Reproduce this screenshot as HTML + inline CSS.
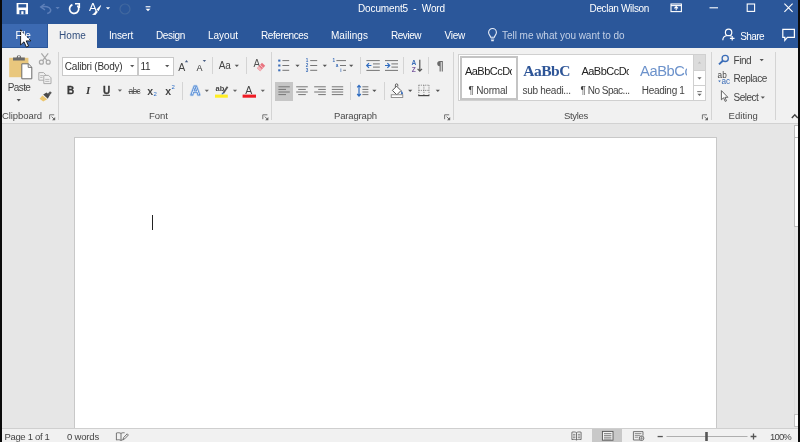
<!DOCTYPE html>
<html><head><meta charset="utf-8"><title>Document5 - Word</title>
<style>
html,body{margin:0;padding:0;}
body{width:800px;height:442px;position:relative;overflow:hidden;background:#e6e6e6;font-family:"Liberation Sans",sans-serif;}
.a{position:absolute;}
.t{position:absolute;height:14px;line-height:14px;white-space:pre;}
svg{position:absolute;overflow:visible;}
.sep{position:absolute;width:1px;background:#d4d4d4;}
#fg{position:absolute;left:0;top:0;width:800px;height:442px;will-change:transform;}

</style></head>
<body>
<div id="fg">
<!-- window chrome -->
<div class="a" style="left:0;top:0;width:800px;height:48px;background:#2b579a"></div>
<div class="a" style="left:2px;top:24px;width:45px;height:23px;background:#3c6ab2"></div>
<div class="a" style="left:48px;top:24px;width:49px;height:24px;background:#f1f1f1"></div>
<!-- ribbon -->
<div class="a" style="left:0;top:48px;width:800px;height:75px;background:#f1f1f1"></div>
<div class="a" style="left:0;top:123px;width:800px;height:1px;background:#d2d2d2"></div>
<!-- document area -->
<div class="a" style="left:0;top:124px;width:800px;height:304px;background:#e6e6e6"></div>
<div class="a" style="left:74px;top:137px;width:643px;height:292px;background:#fff;border:1px solid #c8c8c8;box-sizing:border-box"></div>
<div class="a" style="left:152px;top:215px;width:1px;height:15px;background:#222"></div>
<!-- vertical scrollbar sliver -->
<div class="a" style="left:794px;top:125px;width:4px;height:102px;background:#fff;border:1px solid #bdbdbd;border-right:none;box-sizing:border-box"></div>
<div class="a" style="left:794px;top:137px;width:4px;height:1px;background:#bdbdbd"></div>
<div class="a" style="left:794px;top:227px;width:1px;height:187px;background:#dedede"></div>
<div class="a" style="left:794px;top:414px;width:4px;height:13px;background:#fff;border:1px solid #c4c4c4;border-right:none;box-sizing:border-box"></div>
<!-- status bar -->
<div class="a" style="left:0;top:428px;width:800px;height:14px;background:#f1f1f1;border-top:1px solid #cfcfcf;box-sizing:border-box"></div>
<div class="a" style="left:592px;top:429px;width:30px;height:13px;background:#c8c8c8"></div>

<!-- ribbon separators -->
<div class="sep" style="left:58px;top:52px;height:68px"></div>
<div class="sep" style="left:271px;top:52px;height:68px"></div>
<div class="sep" style="left:453px;top:52px;height:68px"></div>
<div class="sep" style="left:711px;top:52px;height:68px"></div>
<div class="sep" style="left:775px;top:52px;height:68px"></div>
<div class="sep" style="left:212px;top:57px;height:17px"></div>
<div class="sep" style="left:246px;top:57px;height:17px"></div>
<div class="sep" style="left:182px;top:82px;height:18px"></div>
<div class="sep" style="left:360px;top:57px;height:17px"></div>
<div class="sep" style="left:403px;top:57px;height:17px"></div>
<div class="sep" style="left:428px;top:57px;height:17px"></div>
<div class="sep" style="left:350px;top:82px;height:18px"></div>
<div class="sep" style="left:384px;top:82px;height:18px"></div>

<!-- font combos -->
<div class="a" style="left:62px;top:57px;width:76px;height:19px;background:#fff;border:1px solid #c9c9c9;box-sizing:border-box"></div>
<div class="a" style="left:138px;top:57px;width:36px;height:19px;background:#fff;border:1px solid #c9c9c9;box-sizing:border-box"></div>

<!-- align-left selected -->
<div class="a" style="left:275px;top:82px;width:18px;height:19px;background:#c6c6c6"></div>

<!-- styles gallery -->
<div class="a" style="left:458px;top:54px;width:248px;height:47px;background:#fff;border:1px solid #d0d0d0;box-sizing:border-box"></div>
<div class="a" style="left:459.5px;top:55.5px;width:58px;height:44px;border:2.5px solid #c4c4c4;box-sizing:border-box"></div>
<div class="a" style="left:693px;top:54px;width:13px;height:17px;background:#dcdcdc;border:1px solid #d0d0d0;box-sizing:border-box"></div>
<div class="a" style="left:693px;top:70px;width:13px;height:16px;background:#fff;border:1px solid #d0d0d0;box-sizing:border-box"></div>
<div class="a" style="left:693px;top:85px;width:13px;height:16px;background:#fff;border:1px solid #d0d0d0;box-sizing:border-box"></div>
<svg width="800" height="442" viewBox="0 0 800 442" style="left:0;top:0" font-family="'Liberation Sans', sans-serif">
<defs>
<path id="dd" d="M-2.1 -1.1h4.2l-2.1 2.3z"/>
</defs>
<!-- ===== QAT ===== -->
<g>
<rect x="16.6" y="3" width="11.4" height="11.2" fill="#fff"/>
<rect x="18.4" y="4.2" width="7.8" height="3.3" fill="#2b579a"/>
<rect x="19.4" y="10.1" width="6" height="4.1" fill="#2b579a"/>
<rect x="21.3" y="11.2" width="2.2" height="3" fill="#fff"/>
</g>
<!-- undo (disabled) -->
<g fill="none" stroke="#5d7fb9" stroke-width="1.5">
<path d="M41 7c4-1 8.6-0.4 9.6 2.4c0.6 2-1 3.6-3.4 4.2"/>
<path d="M44.6 4l-3.8 3 4.2 2.8" />
</g>
<use href="#dd" x="57.6" y="8" fill="#5d7fb9"/>
<!-- repeat -->
<g fill="none" stroke="#fff" stroke-width="1.7">
<path d="M77.4 5.6a4.6 4.6 0 1 1 -5 -1"/>
<path d="M75 3.7h4.3v4.2" stroke-width="1.6"/>
</g>
<!-- A with brush -->
<text x="88.9" y="10.9" font-size="11.6" fill="#fff">A</text>
<path d="M96.4 9.6l4.2-4.4 0.6 0.4-2.6 5.6z M95.8 10.6l2.2 1.2-2.6 3.2-3.4-0.2c2-1 3-2.4 3.800-4.2z" fill="#fff"/>
<use href="#dd" x="108" y="8.3" fill="#fff"/>
<!-- disabled circle -->
<circle cx="125" cy="9" r="5" fill="none" stroke="#41689f" stroke-width="1.2"/>
<!-- customize qat -->
<rect x="145.6" y="6.2" width="4.8" height="1.1" fill="#fff"/>
<path d="M145.6 8.8h4.8l-2.4 2.4z" fill="#fff"/>

<!-- ===== window controls ===== -->
<g fill="none" stroke="#fff" stroke-width="1.1">
<rect x="671" y="4" width="10.4" height="7.6"/>
<path d="M671 5.6h10.4" />
<path d="M676.2 10.2v-3.4M674.4 8.4l1.8-1.8 1.8 1.8"/>
<path d="M709.5 7.8h8.5"/>
<rect x="747.2" y="4" width="7.4" height="7.4"/>
<path d="M784.4 3.7l8.2 8.2M792.6 3.7l-8.2 8.2"/>
</g>

<!-- ===== tab row icons ===== -->
<!-- lightbulb -->
<g fill="none" stroke="#e8eef8" stroke-width="1.1">
<path d="M490.6 37.2c0-1.6-2-2.4-2-4.8a3.9 3.9 0 0 1 7.8 0c0 2.4-2 3.2-2 4.8z"/>
<path d="M490.8 39h3.4M491.2 40.6h2.6"/>
</g>
<!-- share person -->
<g fill="none" stroke="#fff" stroke-width="1.2">
<circle cx="728.6" cy="32.4" r="3.2"/>
<path d="M722.8 40.3c0-3 2.2-4.8 5.8-4.8 1.2 0 2.2 0.2 3 0.6"/>
<path d="M732.2 36v4.6M729.9 38.3h4.6"/>
</g>
<!-- comment -->
<path d="M782.8 29.4h11.6v8h-7l-2.6 3v-3h-2z" fill="none" stroke="#fff" stroke-width="1.2"/>

<!-- ===== clipboard group ===== -->
<!-- paste -->
<rect x="9.2" y="57.8" width="19.2" height="19.4" fill="#e9c77d"/>
<path d="M13 60.400v-2.800h3.600a2.300 2.300 0 0 1 4.600 0h3.600v2.800z" fill="#6a6a6a"/>
<circle cx="18.9" cy="56.6" r="0.9" fill="#f1f1f1"/>
<path d="M21.8 63.8h6.6l3.4 3.4v11.6h-10z" fill="#fff" stroke="#6a6a6a" stroke-width="1"/>
<path d="M28.2 63.8v3.6h3.6" fill="none" stroke="#6a6a6a" stroke-width="0.9"/>
<use href="#dd" x="18.7" y="100.2" fill="#555"/>
<!-- cut (disabled) -->
<g fill="none" stroke="#a8a8a8" stroke-width="1.2">
<circle cx="41.4" cy="62.2" r="2"/><circle cx="48.2" cy="62.2" r="2"/>
<path d="M42.6 60.6l5.6-7.2M47 60.6l-5.6-7.2"/>
</g>
<!-- copy (disabled) -->
<g fill="#f1f1f1" stroke="#ababab" stroke-width="1">
<path d="M38.8 72.6h4.8l2 2v5.6h-6.8z"/>
<path d="M43.800 75.400h4.800l2.400 2.400v5.800h-7.200z"/>
<path d="M45.200 79.400h4.200M45.200 81.400h4.200" stroke-width="0.8"/>
<path d="M40.2 75.6h3M40.2 77.4h2.4" stroke-width="0.8"/>
</g>
<!-- format painter -->
<g>
<path d="M47.2 94.2l2.8-3 1.8 1.6-2.8 3.2z" fill="#5a5a5a"/>
<path d="M43.2 94.4l3.4-1.8 3 3-1.8 3.2z" fill="#4a4a4a"/>
<path d="M42.4 95.4l-2.8 3.4 3.6 2.8 4-2.4z" fill="#ecc66e"/>
</g>
<!-- launchers -->
<g id="lnch" fill="none" stroke="#666" stroke-width="0.9">
<path d="M49.6 119.2v-4.4h4.6"/>
<path d="M51.6 116.6l2.6 2.6"/>
<path d="M55.2 117v3.200h-3.200z" fill="#666" stroke="none"/>
</g>
<use href="#lnch" x="213.2"/>
<use href="#lnch" x="395"/>
<use href="#lnch" x="652.8"/>

<!-- ===== font group ===== -->
<use href="#dd" x="132.2" y="66" fill="#555"/>
<use href="#dd" x="167.2" y="66" fill="#555"/>
<path d="M184.8 62.2l1.7-2.2 1.7 2.2z" fill="#4a5f85"/>
<path d="M202.7 60h3.4l-1.7 2.1z" fill="#4a5f85"/>
<use href="#dd" x="236.8" y="65.8" fill="#555"/>
<!-- clear formatting -->
<text x="253.6" y="66.6" font-size="10" fill="#555">A</text>
<path d="M257 68.2l5-5.4 3.2 3-5 5.4z" fill="#e8737f"/>
<path d="M257 68.2l1.8-1.9 3.2 3-1.8 1.9z" fill="#f3b6bc"/>
<path d="M259.6 64.6l3.2 3" stroke="#f8d8dc" stroke-width="0.8"/>
<!-- underline -->
<rect x="102.8" y="94.8" width="7.2" height="1" fill="#3a3a3a"/>
<use href="#dd" x="119.9" y="90.6" fill="#666"/>
<!-- text effects A -->
<text x="190.4" y="95.2" font-size="13.4" font-weight="bold" fill="#fff" stroke="#b5cfee" stroke-width="2.4" stroke-linejoin="round" opacity="0.7">A</text>
<text x="190.4" y="95.2" font-size="13.4" font-weight="bold" fill="#fff" stroke="#5a8fd6" stroke-width="0.9" stroke-linejoin="round">A</text>
<use href="#dd" x="206.8" y="90.8" fill="#666"/>
<!-- highlight -->
<text x="215.6" y="91" font-size="7.5" fill="#444" font-weight="bold">ab</text>
<path d="M222.6 92.6l4.2-6.4 1.5 1-4.2 6.4z" fill="#555"/>
<path d="M222 92.4l2.2 1.4-2.6 1z" fill="#3a6fc4"/>
<rect x="215" y="94.6" width="12.8" height="3.1" fill="#ffee22"/>
<use href="#dd" x="235" y="90.8" fill="#666"/>
<!-- font color -->
<text x="245.2" y="93.6" font-size="10.5" fill="#444">A</text>
<rect x="242.6" y="94.6" width="13.4" height="3.1" fill="#ee1c24"/>
<use href="#dd" x="262.8" y="90.8" fill="#666"/>

<!-- ===== paragraph group ===== -->
<!-- bullets -->
<g fill="#3b6db8">
<rect x="278.2" y="59.6" width="2.2" height="2"/><rect x="278.2" y="64.5" width="2.2" height="2"/><rect x="278.2" y="69.3" width="2.2" height="2"/>
</g>
<g stroke="#757575" stroke-width="1">
<path d="M282.4 60.6h6.8M282.4 65.5h6.8M282.4 70.3h6.8"/>
</g>
<use href="#dd" x="297.5" y="65.8" fill="#555"/>
<!-- numbering -->
<g font-size="4.6" fill="#3b6db8" font-weight="bold">
<text x="305.8" y="62.2">1</text><text x="305.8" y="67.1">2</text><text x="305.8" y="72">3</text>
</g>
<path d="M310.2 60.6h7M310.2 65.5h7M310.2 70.3h7" stroke="#757575" stroke-width="1"/>
<use href="#dd" x="324.8" y="65.8" fill="#555"/>
<!-- multilevel -->
<g font-size="4.6" fill="#3b6db8" font-weight="bold">
<text x="332.6" y="62.2">1</text><text x="335.8" y="67.1">a</text><text x="340.2" y="72">i</text>
</g>
<path d="M336.4 60.6h9.6M340 65.5h6M343.2 70.3h2.8" stroke="#757575" stroke-width="1"/>
<use href="#dd" x="351.2" y="65.8" fill="#555"/>
<!-- decrease indent -->
<g stroke="#757575" stroke-width="1">
<path d="M366.4 60.6h13.4M373 63.9h6.8M373 67.1h6.8M366.4 70.4h13.4"/>
<path d="M385 60.6h13M391.4 63.9h6.6M391.4 67.1h6.6M385 70.4h13"/>
</g>
<g fill="none" stroke="#2f6cc0" stroke-width="1.2">
<path d="M371.4 65.5h-4.6M369 63.2l-2.3 2.3 2.3 2.3"/>
<path d="M385 65.5h4.6M387.4 63.2l2.3 2.3-2.3 2.3"/>
</g>
<!-- sort -->
<text x="411.6" y="65.2" font-size="6.6" font-weight="bold" fill="#3b6db8">A</text>
<text x="411.8" y="71.6" font-size="6.6" font-weight="bold" fill="#7a5a9e">Z</text>
<path d="M419.8 59.8v11M417.6 68.8l2.2 2.4 2.2-2.4" fill="none" stroke="#555" stroke-width="1.2"/>
<!-- pilcrow -->
<text x="436.4" y="70.4" font-size="11.5" font-weight="bold" fill="#6a6a6a" font-family="'DejaVu Sans', sans-serif">&#182;</text>
<!-- alignment -->
<g stroke="#757575" stroke-width="1">
<path d="M278.4 86.8h11.4M278.4 89.4h7.6M278.4 92h11.4M278.4 94.6h7.6"/>
<path d="M296.2 86.8h11.6M298.2 89.4h7.6M296.2 92h11.6M298.2 94.6h7.6"/>
<path d="M314.2 86.8h11.6M318.2 89.4h7.6M314.2 92h11.6M318.2 94.6h7.6"/>
<path d="M331.8 86.8h11.4M331.8 89.4h11.4M331.8 92h11.4M331.8 94.6h11.4"/>
</g>
<!-- line spacing -->
<path d="M359 85.4v10.6M357.2 87.4l1.8-2 1.8 2M357.2 94l1.8 2 1.8-2" fill="none" stroke="#2f6cc0" stroke-width="1.2"/>
<path d="M362.4 86.8h6M362.4 89.4h6M362.4 92h6M362.4 94.6h6" stroke="#757575" stroke-width="1"/>
<use href="#dd" x="374.4" y="90.8" fill="#555"/>
<!-- shading -->
<path d="M392.4 90.4l4.2-4.2 4.4 4.4-4.2 4.2z" fill="#fff" stroke="#555" stroke-width="1"/>
<path d="M395.4 87.2v-2.2a1.2 1.2 0 0 1 2.4 0v1.4" fill="none" stroke="#555" stroke-width="0.9"/>
<path d="M401.2 90.4c1.4 1.4 1.8 2.4 1.8 3.2a1 1 0 0 1-2 0c0-0.8 0.2-1.6 0.2-3.2z" fill="#3b6db8"/>
<rect x="391.2" y="94.8" width="11.6" height="2.6" fill="#fff" stroke="#777" stroke-width="0.8"/>
<use href="#dd" x="410.2" y="90.8" fill="#555"/>
<!-- borders -->
<g stroke="#777" stroke-width="0.9" stroke-dasharray="1.1 1.1" fill="none">
<path d="M418.6 85.2h10.6M418.6 90.4h10.6M418.8 85.2v10.4M423.9 85.2v10.4M429 85.2v10.4"/>
</g>
<path d="M418.2 95.6h11.2" stroke="#444" stroke-width="1.2"/>
<use href="#dd" x="437.8" y="90.8" fill="#555"/>

<!-- ===== styles scroll ===== -->
<path d="M697.8 63.4l1.7-1.8 1.7 1.8z" fill="#bdbdbd"/>
<use href="#dd" x="699.5" y="78.4" fill="#666"/>
<rect x="697.2" y="91.2" width="4.6" height="0.9" fill="#666"/>
<use href="#dd" x="699.5" y="94.9" fill="#666"/>

<!-- ===== editing ===== -->
<g fill="none" stroke="#3b6db8">
<circle cx="725.2" cy="58.4" r="3.1" stroke-width="1.3"/>
<path d="M722.8 60.8l-3.8 3.6" stroke-width="1.9"/>
</g>
<use href="#dd" x="761.7" y="60" fill="#555"/>
<text x="717.6" y="78.2" font-size="8.2" fill="#444">ab</text>
<text x="721.4" y="84.2" font-size="8.2" fill="#3b6db8">ac</text>
<path d="M718.2 80.6h2.6l-1.3 1.6z" fill="#3b6db8"/>
<path d="M721.4 90.6v9.2l2.2-2 1.6 3.6 1.3-0.6-1.6-3.5h3z" fill="#fff" stroke="#555" stroke-width="0.9" stroke-linejoin="round"/>
<use href="#dd" x="762.8" y="97.6" fill="#555"/>
<!-- collapse ribbon -->
<path d="M791.8 118l3-3.2 3 3.2" fill="none" stroke="#444" stroke-width="1.4"/>

<!-- ===== status bar icons ===== -->
<!-- proofing -->
<g fill="none" stroke="#666" stroke-width="0.9">
<path d="M121 433.4c-1.4-0.8-3-0.8-4.6-0.4v7c1.6-0.4 3.2-0.4 4.6 0.4zM121 433.4c1.2-0.7 2.4-0.8 3.6-0.6M121 440.4c1-0.5 1.6-0.6 2.4-0.7"/>
<path d="M123 439.6l0.6-2 3.6-3.8 1.2 1.2-3.6 3.8z" fill="#f1f1f1"/>
</g>
<!-- read mode -->
<g fill="none" stroke="#666" stroke-width="0.9">
<path d="M576.5 432.6c-1.4-0.8-3-0.8-4.6-0.4v7.4c1.6-0.4 3.2-0.4 4.6 0.4c1.4-0.8 3-0.8 4.6-0.4v-7.4c-1.6-0.4-3.2-0.4-4.6 0.4zM576.5 432.6v7.4"/>
<path d="M573 434.4h2.4M573 436h2.4M573 437.6h2.4M577.8 434.4h2.4M577.8 436h2.4M577.8 437.6h2.4" stroke-width="0.7"/>
</g>
<!-- print layout -->
<g fill="none" stroke="#555" stroke-width="0.9">
<rect x="602.4" y="431.4" width="10.6" height="8.8" fill="#f4f4f4"/>
<path d="M604 433.6h7.4M604 435.4h7.4M604 437.2h7.4M604 439h7.4" stroke-width="0.7"/>
</g>
<!-- web layout -->
<g fill="none" stroke="#666" stroke-width="0.9">
<path d="M640.6 440h-7.2v-8.4h9.6v4"/>
<path d="M634.8 433.6h6.6M634.8 435.4h5.4M634.8 437.2h3.6" stroke-width="0.7"/>
<circle cx="641.6" cy="438.2" r="2.3" fill="#f1f1f1"/>
<path d="M639.4 438.2h4.4M641.6 436v4.4" stroke-width="0.6"/>
</g>
<!-- zoom -->
<rect x="657.6" y="435.9" width="5.2" height="1.3" fill="#555"/>
<rect x="666.5" y="436" width="81" height="0.9" fill="#a8a8a8"/>
<rect x="705.2" y="432" width="2.6" height="9" fill="#555"/>
<path d="M750.6 436.5h5.8M753.5 433.6v5.8" stroke="#555" stroke-width="1.3"/>

<!-- ===== mouse cursor ===== -->
<path d="M20.6 29.8v15.2l3.4-3.200 2.400 5.300 2.200-1-2.400-5.200h4.700z" fill="#fff" stroke="#111" stroke-width="0.9" stroke-linejoin="round"/>
</svg>

<div class="t" style="left:358px;top:2.1000000000000005px;font-family:'Liberation Sans', sans-serif;font-size:10px;color:#fff;letter-spacing:-0.128px;">Document5  -  Word</div>
<div class="t" style="left:589.5px;top:1.8px;font-family:'Liberation Sans', sans-serif;font-size:10px;color:#fff;letter-spacing:-0.340px;">Declan Wilson</div>
<div class="t" style="left:15.6px;top:29.3px;font-family:'Liberation Sans', sans-serif;font-size:10px;color:#fff;letter-spacing:-0.306px;">File</div>
<div class="t" style="left:59px;top:29.3px;font-family:'Liberation Sans', sans-serif;font-size:10px;color:#34507e;letter-spacing:0.078px;">Home</div>
<div class="t" style="left:109px;top:29.3px;font-family:'Liberation Sans', sans-serif;font-size:10px;color:#fff;letter-spacing:-0.169px;">Insert</div>
<div class="t" style="left:156px;top:29.3px;font-family:'Liberation Sans', sans-serif;font-size:10px;color:#fff;letter-spacing:-0.357px;">Design</div>
<div class="t" style="left:208px;top:29.3px;font-family:'Liberation Sans', sans-serif;font-size:10px;color:#fff;letter-spacing:-0.005px;">Layout</div>
<div class="t" style="left:261px;top:29.3px;font-family:'Liberation Sans', sans-serif;font-size:10px;color:#fff;letter-spacing:-0.414px;">References</div>
<div class="t" style="left:331px;top:29.3px;font-family:'Liberation Sans', sans-serif;font-size:10px;color:#fff;letter-spacing:0.039px;">Mailings</div>
<div class="t" style="left:391px;top:29.3px;font-family:'Liberation Sans', sans-serif;font-size:10px;color:#fff;letter-spacing:-0.466px;">Review</div>
<div class="t" style="left:444.5px;top:29.3px;font-family:'Liberation Sans', sans-serif;font-size:10px;color:#fff;letter-spacing:-0.250px;">View</div>
<div class="t" style="left:502px;top:29.3px;font-family:'Liberation Sans', sans-serif;font-size:10px;color:#c3d0e6;letter-spacing:-0.034px;">Tell me what you want to do</div>
<div class="t" style="left:740.2px;top:29.599999999999998px;font-family:'Liberation Sans', sans-serif;font-size:10px;color:#fff;letter-spacing:-0.578px;">Share</div>
<div class="t" style="left:7.7px;top:81.2px;font-family:'Liberation Sans', sans-serif;font-size:10px;color:#444;letter-spacing:-0.596px;">Paste</div>
<div class="t" style="left:2px;top:108.89999999999999px;font-family:'Liberation Sans', sans-serif;font-size:9.5px;color:#4a4a4a;letter-spacing:-0.075px;">Clipboard</div>
<div class="t" style="left:64.8px;top:59.8px;font-family:'Liberation Sans', sans-serif;font-size:10px;color:#333;letter-spacing:-0.206px;">Calibri (Body)</div>
<div class="t" style="left:140.4px;top:59.8px;font-family:'Liberation Sans', sans-serif;font-size:10px;color:#333;letter-spacing:-0.145px;">11</div>
<div class="t" style="left:149px;top:108.89999999999999px;font-family:'Liberation Sans', sans-serif;font-size:9.5px;color:#4a4a4a;letter-spacing:-0.004px;">Font</div>
<div class="t" style="left:334px;top:108.89999999999999px;font-family:'Liberation Sans', sans-serif;font-size:9.5px;color:#4a4a4a;letter-spacing:-0.153px;">Paragraph</div>
<div class="t" style="left:564px;top:108.89999999999999px;font-family:'Liberation Sans', sans-serif;font-size:9.5px;color:#4a4a4a;letter-spacing:-0.312px;">Styles</div>
<div class="t" style="left:728.6px;top:108.89999999999999px;font-family:'Liberation Sans', sans-serif;font-size:9.5px;color:#4a4a4a;letter-spacing:0.020px;">Editing</div>
<div class="t" style="left:733.5px;top:53.8px;font-family:'Liberation Sans', sans-serif;font-size:10px;color:#444;letter-spacing:-0.463px;">Find</div>
<div class="t" style="left:733.5px;top:72.1px;font-family:'Liberation Sans', sans-serif;font-size:10px;color:#444;letter-spacing:-0.500px;">Replace</div>
<div class="t" style="left:733.5px;top:90.8px;font-family:'Liberation Sans', sans-serif;font-size:10px;color:#444;letter-spacing:-0.516px;">Select</div>
<div class="t" style="left:67.1px;top:84.3px;font-family:'Liberation Sans', sans-serif;font-size:10px;color:#3a3a3a;letter-spacing:-1.034px;font-weight:bold;-webkit-text-stroke:0.3px #3a3a3a;">B</div>
<div class="t" style="left:85.9px;top:83.39999999999999px;font-family:'Liberation Serif', serif;font-size:11px;color:#3a3a3a;letter-spacing:-0.381px;font-weight:bold;font-style:italic;">I</div>
<div class="t" style="left:103.0px;top:84.1px;font-family:'Liberation Sans', sans-serif;font-size:10px;color:#3a3a3a;letter-spacing:-0.434px;font-weight:bold;-webkit-text-stroke:0.3px #3a3a3a;">U</div>
<div class="t" style="left:128.5px;top:84.1px;font-family:'Liberation Sans', sans-serif;font-size:8.5px;color:#555;letter-spacing:-0.740px;text-decoration:line-through;">abc</div>
<div class="t" style="left:147.3px;top:84.1px;font-family:'Liberation Sans', sans-serif;font-size:10.5px;color:#444;letter-spacing:-0.344px;font-weight:bold;">x</div>
<div class="t" style="left:153.5px;top:87.3px;font-family:'Liberation Sans', sans-serif;font-size:6px;color:#2b6cc4;letter-spacing:0.156px;">2</div>
<div class="t" style="left:165.3px;top:84.1px;font-family:'Liberation Sans', sans-serif;font-size:10.5px;color:#444;letter-spacing:-0.344px;font-weight:bold;">x</div>
<div class="t" style="left:171.5px;top:80.3px;font-family:'Liberation Sans', sans-serif;font-size:6px;color:#2b6cc4;letter-spacing:0.156px;">2</div>
<div class="t" style="left:178.3px;top:60.3px;font-family:'Liberation Sans', sans-serif;font-size:10.5px;color:#444;letter-spacing:0.484px;">A</div>
<div class="t" style="left:196.6px;top:60.8px;font-family:'Liberation Sans', sans-serif;font-size:9px;color:#333;letter-spacing:0.084px;">A</div>
<div class="t" style="left:218.8px;top:59.39999999999999px;font-family:'Liberation Sans', sans-serif;font-size:10px;color:#444;letter-spacing:-0.117px;">Aa</div>
<div class="t" style="left:464.9px;top:64.2px;font-family:'Liberation Sans', sans-serif;font-size:11px;color:#222;letter-spacing:-0.512px;width:47.4px;overflow:hidden;">AaBbCcDc</div>
<div class="t" style="left:468.4px;top:84.2px;font-family:'Liberation Sans', sans-serif;font-size:10px;color:#444;letter-spacing:-0.174px;">¶ Normal</div>
<div class="t" style="left:523.2px;top:64.0px;font-family:'Liberation Serif', serif;font-size:15.5px;color:#2e5597;letter-spacing:-0.482px;font-weight:bold;">AaBbC</div>
<div class="t" style="left:522.6px;top:84.2px;font-family:'Liberation Sans', sans-serif;font-size:10px;color:#444;letter-spacing:-0.293px;">sub headi...</div>
<div class="t" style="left:581.4px;top:64.2px;font-family:'Liberation Sans', sans-serif;font-size:11px;color:#222;letter-spacing:-0.512px;width:47.4px;overflow:hidden;">AaBbCcDc</div>
<div class="t" style="left:580.5px;top:84.2px;font-family:'Liberation Sans', sans-serif;font-size:10px;color:#444;letter-spacing:-0.487px;">¶ No Spac...</div>
<div class="t" style="left:640px;top:64.0px;font-family:'Liberation Sans', sans-serif;font-size:14.7px;color:#6c92cb;letter-spacing:-0.398px;width:46.6px;overflow:hidden;">AaBbCc</div>
<div class="t" style="left:641.8px;top:84.2px;font-family:'Liberation Sans', sans-serif;font-size:10px;color:#444;letter-spacing:-0.310px;">Heading 1</div>
<div class="t" style="left:4.4px;top:430.0px;font-family:'Liberation Sans', sans-serif;font-size:9.5px;color:#444;letter-spacing:-0.310px;">Page 1 of 1</div>
<div class="t" style="left:67px;top:429.6px;font-family:'Liberation Sans', sans-serif;font-size:9.5px;color:#444;letter-spacing:-0.181px;">0 words</div>
<div class="t" style="left:770px;top:430.3px;font-family:'Liberation Sans', sans-serif;font-size:9.5px;color:#444;letter-spacing:-0.828px;">100%</div>
<!-- screen edges -->
<div class="a" style="left:0;top:0;width:2px;height:442px;background:#0a0a0a"></div>
<div class="a" style="left:798px;top:0;width:2px;height:442px;background:#0a0a0a"></div>

</div>
</body></html>
